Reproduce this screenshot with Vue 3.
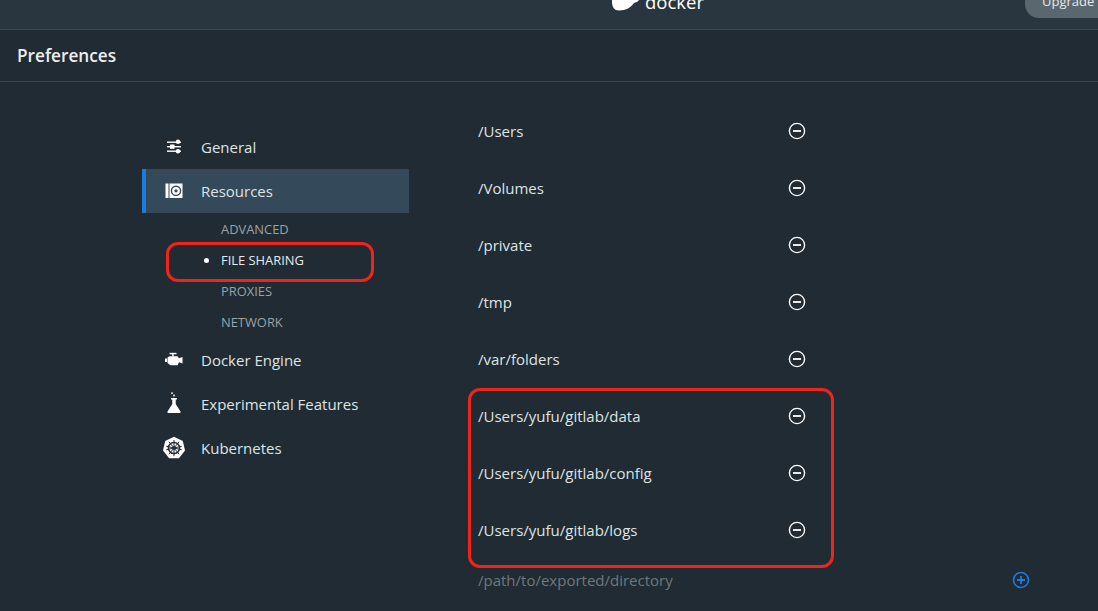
<template>
  <div class="window">
    <header class="topbar">
      <div class="logo">
        <svg class="whale" width="30" height="14" viewBox="0 0 30 14">
          <path d="M1 0h28c-1 3-3.500 4.500-6 5C20 9.500 15 12.500 8 12.500 3.500 12.500 1 9 1 4z" fill="#fff" />
        </svg>
        <span class="logo-text">docker</span>
      </div>
      <button class="upgrade">Upgrade</button>
    </header>

    <div class="titlebar">Preferences</div>

    <div class="content">
      <nav class="sidebar">
        <div class="nav-item">
          <svg class="nav-icon" viewBox="0 0 18 18" fill="#fff">
            <rect x="2" y="3.500" width="14" height="1.400" />
            <rect x="2" y="8" width="14" height="1.400" />
            <rect x="2" y="12.500" width="14" height="1.400" />
            <circle cx="13" cy="3.800" r="2.200" />
            <rect x="5" y="6.500" width="4.500" height="4.300" />
            <circle cx="13" cy="13.300" r="2.200" />
          </svg>
          <span>General</span>
        </div>

        <div class="nav-item active">
          <svg class="nav-icon" viewBox="0 0 18 18">
            <rect x="0.500" y="1.500" width="3" height="14.500" fill="#fff" />
            <rect x="4.500" y="1.500" width="13" height="14.500" fill="#fff" />
            <circle cx="11" cy="8.800" r="4.600" fill="none" stroke="#34495a" stroke-width="1.400" />
            <circle cx="11" cy="8.800" r="1.600" fill="#34495a" />
          </svg>
          <span>Resources</span>
        </div>

        <ul class="sub-list">
          <li v-for="sub in subItems" :key="sub" class="sub-item" :class="{ current: sub === 'FILE SHARING' }">
            {{ sub }}
          </li>
        </ul>

        <div class="nav-item">
          <svg class="nav-icon" viewBox="0 0 18 18" fill="#fff">
            <rect x="4.500" y="1.800" width="7" height="1.500" />
            <rect x="7.200" y="3" width="1.500" height="2.500" />
            <path d="M2.500 6.500l2-1.300h8l1.500 2 3.500-1.200v6.500l-3.500-1.200-1.500 3H5.500l-3-2.300z" />
            <rect x="0" y="7.500" width="2" height="3.500" />
          </svg>
          <span>Docker Engine</span>
        </div>

        <div class="nav-item">
          <svg class="nav-icon tall" viewBox="0 0 18 22" fill="#fff">
            <circle cx="7" cy="1.200" r="0.900" />
            <circle cx="9" cy="3.500" r="0.900" />
            <rect x="6" y="6" width="6" height="1.500" />
            <path d="M7.300 7h3.400v5l4.800 7.500q.6 1.500-1 1.500H3.500q-1.600 0-1-1.500L7.300 12z" />
          </svg>
          <span>Experimental Features</span>
        </div>

        <div class="nav-item">
          <svg class="nav-icon kube" viewBox="0 0 24 24">
            <path d="M12 .8l8.800 4.200 2.200 9.500-6.100 7.700H7.100L1 14.500 3.200 5z" fill="#fff" />
            <g fill="none" stroke="#202b33">
              <circle cx="12" cy="12" r="5.600" stroke-width="1.500" />
              <circle cx="12" cy="12" r="1.400" stroke-width="1" />
              <path d="M12 4v16M4.200 10.200l15.600 3.600M19.800 10.200L4.200 13.800M7 5.800l10 12.400M17 5.800L7 18.200" stroke-width="1" />
            </g>
          </svg>
          <span>Kubernetes</span>
        </div>
      </nav>

      <section class="shares">
        <div v-for="dir in directories" :key="dir" class="share-row">
          <span class="share-path">{{ dir }}</span>
          <svg class="round-btn" viewBox="0 0 18 18" fill="none" stroke="#fff" stroke-width="1.400">
            <circle cx="9" cy="9" r="7.600" />
            <path d="M5 9h8" stroke-width="1.800" />
          </svg>
        </div>
        <div class="add-row">
          <span class="placeholder">/path/to/exported/directory</span>
          <svg class="round-btn" viewBox="0 0 18 18" fill="none" stroke="#1b7ce0" stroke-width="1.600">
            <circle cx="9" cy="9" r="7.500" />
            <path d="M5 9h8M9 5v8" stroke-width="1.800" />
          </svg>
        </div>
      </section>
    </div>

    <div class="mark mark-nav"></div>
    <div class="mark mark-list"></div>
  </div>
</template>

<script setup>
const subItems = ['ADVANCED', 'FILE SHARING', 'PROXIES', 'NETWORK']

const directories = [
  '/Users',
  '/Volumes',
  '/private',
  '/tmp',
  '/var/folders',
  '/Users/yufu/gitlab/data',
  '/Users/yufu/gitlab/config',
  '/Users/yufu/gitlab/logs'
]
</script>

<style>
html,
body {
  margin: 0;
  background: #202b33;
}
</style>

<style scoped>
.window {
  position: relative;
  width: 1098px;
  height: 611px;
  overflow: hidden;
  background: #202b33;
  color: #dfe3e5;
  font-family: "Open Sans", "Liberation Sans", sans-serif;
}

.topbar {
  position: relative;
  height: 29px;
  overflow: hidden;
  background: #2a363f;
  border-bottom: 1px solid #3a4750;
}

.logo {
  display: flex;
  align-items: flex-end;
  gap: 4px;
  height: 12px;
  margin-left: 611px;
}

.whale {
  flex: none;
}

.logo-text {
  font-size: 18.500px;
  line-height: 20px;
  color: #fff;
}

.upgrade {
  position: absolute;
  top: -12px;
  left: 1025px;
  width: 100px;
  height: 30px;
  padding: 0 0 5px 17px;
  border: none;
  border-radius: 14px;
  background: #5b676f;
  color: #e6e9ea;
  font-family: inherit;
  font-size: 13px;
  text-align: left;
}

.titlebar {
  height: 51px;
  line-height: 51px;
  padding-left: 17px;
  font-size: 17.200px;
  font-weight: 600;
  color: #eceeef;
  border-bottom: 1px solid #37434b;
}

.content {
  display: flex;
  padding-left: 142px;
}

.sidebar {
  width: 267px;
  padding-top: 43px;
}

.nav-item {
  display: flex;
  align-items: center;
  height: 44px;
  padding-left: 23px;
  font-size: 15px;
  color: #dfe3e5;
}

.nav-item.active {
  padding-left: 19px;
  border-left: 4px solid #1b7ce0;
  background: #34495a;
}

.nav-icon {
  width: 18px;
  height: 18px;
  margin-right: 18px;
  flex: none;
}

.nav-icon.tall {
  height: 22px;
  margin-bottom: 2px;
}

.nav-icon.kube {
  width: 24px;
  height: 24px;
  margin-left: -3px;
  margin-right: 15px;
}

.sub-list {
  list-style: none;
  margin: 0;
  padding: 1px 0 0 79px;
}

.sub-item {
  position: relative;
  height: 31px;
  line-height: 31px;
  font-size: 12.900px;
  color: #9aa3a9;
}

.sub-item.current {
  color: #e8ebec;
}

.sub-item.current::before {
  content: "";
  position: absolute;
  left: -17px;
  top: 13px;
  width: 5px;
  height: 5px;
  border-radius: 50%;
  background: #fff;
}

.shares {
  width: 552px;
  margin-left: 69px;
  padding-top: 20px;
}

.share-row {
  display: flex;
  align-items: center;
  justify-content: space-between;
  width: 328px;
  height: 57px;
}

.share-path {
  font-size: 15px;
  color: #dfe3e5;
}

.round-btn {
  width: 18px;
  height: 18px;
  flex: none;
}

.add-row {
  display: flex;
  align-items: center;
  justify-content: space-between;
  height: 24px;
  margin-top: 10px;
}

.placeholder {
  font-size: 15px;
  color: #6f787e;
}

.mark {
  position: absolute;
  box-sizing: border-box;
  border: 3px solid #f0241b;
  border-radius: 12px;
}

.mark-nav {
  left: 166px;
  top: 242px;
  width: 208px;
  height: 40px;
}

.mark-list {
  left: 468px;
  top: 388px;
  width: 366px;
  height: 180px;
}
</style>
